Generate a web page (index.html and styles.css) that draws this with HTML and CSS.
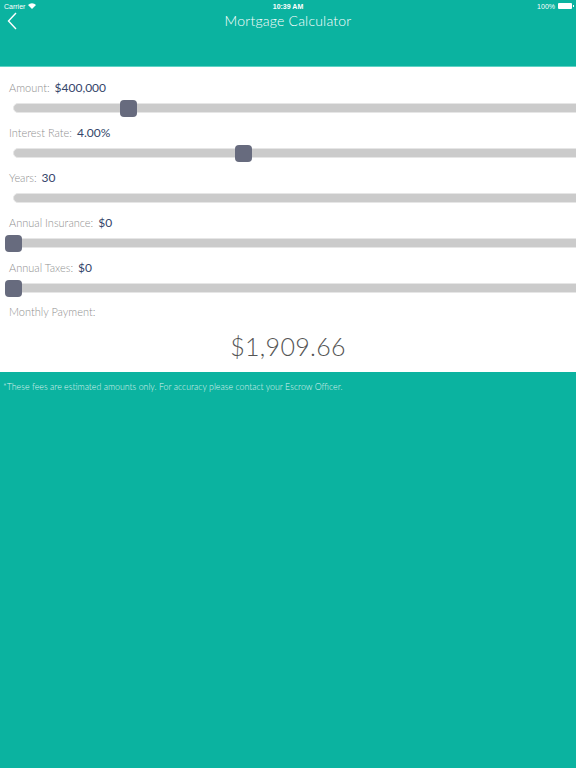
FILE: index.html
```html
<!DOCTYPE html>
<html lang="en">

<head>
    <meta charset="UTF-8">
    <meta name="viewport" content="width=device-width, initial-scale=1.0">
    <title>Mortgage Calculator</title>
    <link rel="stylesheet" href="styles.css">
</head>

<body>
    <header class="header">
        <div class="status-bar">
            <span class="carrier">Carrier
                <svg class="wifi" width="8" height="6" viewBox="0 0 8 6">
                    <path d="M0 2 A5.5 5.5 0 0 1 8 2 L4 6 Z" fill="white" />
                </svg>
            </span>
            <span class="clock">10:39 AM</span>
            <span class="battery">100%
                <span class="battery-body"></span>
            </span>
        </div>
        <nav class="nav-bar">
            <svg class="back" width="10" height="18" viewBox="0 0 10 18">
                <path d="M9 1 L1.5 9 L9 17" fill="none" stroke="white" stroke-width="1.4" />
            </svg>
            <h1 class="title">Mortgage Calculator</h1>
        </nav>
    </header>

    <section class="calculator">
        <div class="row">
            <div class="label">Amount: <span class="value">$400,000</span></div>
            <div class="slider">
                <div class="track"></div>
                <div class="thumb" style="left: 115px"></div>
            </div>
        </div>
        <div class="row">
            <div class="label">Interest Rate: <span class="value">4.00%</span></div>
            <div class="slider">
                <div class="track"></div>
                <div class="thumb" style="left: 230px"></div>
            </div>
        </div>
        <div class="row">
            <div class="label">Years: <span class="value">30</span></div>
            <div class="slider">
                <div class="track"></div>
            </div>
        </div>
        <div class="row">
            <div class="label">Annual Insurance: <span class="value">$0</span></div>
            <div class="slider">
                <div class="track"></div>
                <div class="thumb" style="left: 0px"></div>
            </div>
        </div>
        <div class="row">
            <div class="label">Annual Taxes: <span class="value">$0</span></div>
            <div class="slider">
                <div class="track"></div>
                <div class="thumb" style="left: 0px"></div>
            </div>
        </div>
        <div class="label payment-label">Monthly Payment:</div>
        <div class="payment">$1,909.66</div>
    </section>

    <p class="note">*These fees are estimated amounts only. For accuracy please contact your Escrow Officer.</p>
</body>

</html>
```

FILE: styles.css
```css
* {
    margin: 0;
    padding: 0;
    box-sizing: border-box;
}

html,
body {
    height: 100%;
}

body {
    font-family: 'Lato', sans-serif;
    background: #0bb3a0;
    overflow: hidden;
    color: white;
}

.header {
    height: 67px;
    border-bottom: 1px solid #5fd3c5;
}

.status-bar {
    height: 12px;
    display: flex;
    justify-content: space-between;
    align-items: center;
    padding: 0 4px;
    font-family: 'Liberation Sans', sans-serif;
    font-size: 7px;
    position: relative;
}

.carrier,
.battery {
    display: flex;
    align-items: center;
    gap: 3px;
}

.clock {
    position: absolute;
    left: 0;
    right: 0;
    text-align: center;
    font-weight: bold;
}

.battery-body {
    width: 14px;
    height: 6px;
    background: white;
    border-radius: 1px;
    position: relative;
}

.battery-body::after {
    content: '';
    position: absolute;
    right: -2px;
    top: 2px;
    width: 1px;
    height: 2px;
    background: white;
}

.nav-bar {
    height: 16px;
    display: flex;
    align-items: center;
    justify-content: center;
    position: relative;
}

.back {
    position: absolute;
    left: 7px;
    top: 0;
}

.title {
    font-weight: 300;
    font-size: 14px;
    letter-spacing: 0.2px;
}

.calculator {
    background: white;
    padding-top: 11px;
    height: 305px;
}

.row {
    margin-bottom: 5px;
}

.label {
    height: 20px;
    line-height: 20px;
    padding-left: 9px;
    font-size: 11px;
    font-weight: 300;
    color: #8f8f8f;
}

.value {
    font-size: 12px;
    font-weight: 400;
    color: #34466a;
    margin-left: 2px;
}

.slider {
    height: 20px;
    position: relative;
    overflow: hidden;
}

.track {
    position: absolute;
    left: 13px;
    right: -20px;
    top: 5px;
    height: 10px;
    background: #cbcbcb;
    border: 1px solid #e6e6e6;
    border-radius: 5px;
}

.thumb {
    position: absolute;
    top: 2px;
    margin-left: 5px;
    width: 17px;
    height: 17px;
    background: #676b7e;
    border-radius: 4px;
}

.payment-label {
    margin-top: -1px;
}

.payment {
    height: 48px;
    line-height: 48px;
    text-align: center;
    font-size: 25px;
    font-weight: 300;
    color: #555;
    letter-spacing: 0.3px;
}

.note {
    padding: 9px 3px;
    font-size: 8.8px;
    font-weight: 300;
    color: rgba(255, 255, 255, 0.85);
}
```
